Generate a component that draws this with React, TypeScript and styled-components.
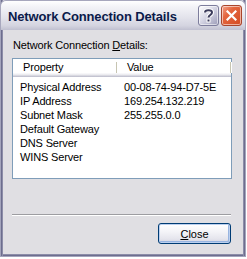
import styled, { createGlobalStyle } from "styled-components";

const GlobalStyle = createGlobalStyle`
  html, body {
    margin: 0;
    padding: 0;
    background: #ffffff;
  }
  body {
    font-family: "Liberation Sans", Arial, sans-serif;
    font-size: 11px;
    letter-spacing: -0.15px;
    color: #000;
  }
`;

const Window = styled.div`
  width: 246px;
  height: 257px;
  box-sizing: border-box;
  display: flex;
  flex-direction: column;
  background: #e0dfe3;
  border: 1px solid #a4a4bc;
  border-top: none;
  box-shadow: inset 1px 0 0 #6d6e8e, inset 2px 0 0 #8c8ca8, inset -1px 0 0 #6d6e8e,
    inset -2px 0 0 #8c8ca8, inset 0 -1px 0 #6d6e8e, inset 0 -2px 0 #8c8ca8;
`;

const TitleBar = styled.div`
  height: 29px;
  flex: none;
  display: flex;
  align-items: center;
  padding: 0 3px 0 7px;
  border-radius: 6px 6px 0 0;
  margin: 0 -1px;
  background: linear-gradient(
    to bottom,
    #ffffff 0%,
    #f3f3f7 20%,
    #e4e4ec 55%,
    #d4d4e0 85%,
    #c0c0d0 100%
  );
  border: 1px solid #a7a7bd;
  border-bottom: none;
`;

const Title = styled.span`
  flex: 1;
  font-family: "Liberation Sans", Arial, sans-serif;
  font-weight: bold;
  font-size: 13px;
  color: #0b1a4a;
  letter-spacing: -0.15px;
  padding-top: 1px;
`;

const CaptionButton = styled.div<{ $red?: boolean }>`
  width: 21px;
  height: 21px;
  box-sizing: border-box;
  border-radius: 3px;
  display: flex;
  align-items: center;
  justify-content: center;
  margin-left: 2px;
  border: 1px solid ${(p) => (p.$red ? "#a9452c" : "#7d7d9c")};
  background: ${(p) =>
    p.$red
      ? "linear-gradient(135deg, #f4a58f 0%, #e4663f 35%, #d44a22 100%)"
      : "linear-gradient(135deg, #ffffff 0%, #d8d8e6 45%, #9c9cb8 100%)"};
  box-shadow: inset 0 0 0 1px rgba(255, 255, 255, 0.55);
`;

const Body = styled.div`
  flex: 1;
  display: flex;
  flex-direction: column;
  padding: 9px 0 0 11px;
`;

const Label = styled.div`
  line-height: 13px;
  padding-left: 1px;
  u {
    text-decoration: underline;
  }
`;

const ListView = styled.div`
  margin-top: 6px;
  width: 220px;
  height: 121px;
  box-sizing: border-box;
  border: 1px solid #7f9db9;
  background: #ffffff;
`;

const Header = styled.div`
  display: flex;
  height: 18px;
  box-sizing: border-box;
  background: linear-gradient(to bottom, #ffffff 0%, #ffffff 75%, #f0f0f4 85%, #d8d8e0 92%, #b8b8c8 100%);
`;

const HeaderCell = styled.div<{ $w: number }>`
  width: ${(p) => p.$w}px;
  flex: none;
  box-sizing: border-box;
  padding: 2px 0 0 10px;
  line-height: 13px;
  position: relative;
  &::after {
    content: "";
    position: absolute;
    right: 0;
    top: 3px;
    height: 11px;
    width: 1px;
    background: #c7c5b2;
    box-shadow: 1px 0 0 #ffffff;
  }
`;

const Rows = styled.div`
  padding-top: 3px;
`;

const Row = styled.div`
  display: flex;
  height: 14px;
  line-height: 14px;
`;

const Cell = styled.div<{ $w: number }>`
  width: ${(p) => p.$w}px;
  flex: none;
  padding-left: 7px;
  box-sizing: border-box;
  white-space: nowrap;
`;

const Separator = styled.div`
  margin-top: 35px;
  width: 219px;
  height: 1px;
  background: #9d9da1;
  box-shadow: 0 1px 0 #ffffff;
`;

const Footer = styled.div`
  width: 219px;
  display: flex;
  justify-content: flex-end;
  margin-top: 8px;
`;

const Button = styled.button`
  width: 73px;
  height: 21px;
  box-sizing: border-box;
  border: 1px solid #003c74;
  border-radius: 3px;
  font-family: "Liberation Sans", Arial, sans-serif;
  font-size: 11px;
  color: #000;
  padding: 0;
  background: linear-gradient(to bottom, #ffffff 0%, #f4f4f8 40%, #e4e4ec 80%, #cfcfdc 100%);
  box-shadow: inset 0 0 0 1px #bcd0ef, inset -1px -1px 0 1px #98b4e0;
  u {
    text-decoration: underline;
  }
`;

const rows = [
  ["Physical Address", "00-08-74-94-D7-5E"],
  ["IP Address", "169.254.132.219"],
  ["Subnet Mask", "255.255.0.0"],
  ["Default Gateway", ""],
  ["DNS Server", ""],
  ["WINS Server", ""],
];

export default function App() {
  return (
    <>
      <GlobalStyle />
      <Window>
        <TitleBar>
          <Title>Network Connection Details</Title>
          <CaptionButton>
            <svg width="13" height="15" viewBox="0 0 13 15">
              <path
                d="M3 4.5 C3 1.5 10 1.5 10 4.5 C10 7 6.5 7 6.5 9.5"
                fill="none"
                stroke="#ffffff"
                strokeWidth="4"
              />
              <path
                d="M3 4.5 C3 1.5 10 1.5 10 4.5 C10 7 6.5 7 6.5 9.5"
                fill="none"
                stroke="#3c3c5c"
                strokeWidth="2"
              />
              <rect x="4.5" y="10.5" width="4" height="4" fill="#ffffff" />
              <rect x="5.5" y="11.5" width="2" height="2" fill="#3c3c5c" />
            </svg>
          </CaptionButton>
          <CaptionButton $red>
            <svg width="11" height="11" viewBox="0 0 11 11">
              <path d="M1.5 1.5 L9.5 9.5 M9.5 1.5 L1.5 9.5" stroke="#ffffff" strokeWidth="2.2" strokeLinecap="square" />
            </svg>
          </CaptionButton>
        </TitleBar>
        <Body>
          <Label>
            Network Connection <u>D</u>etails:
          </Label>
          <ListView>
            <Header>
              <HeaderCell $w={104}>Property</HeaderCell>
              <HeaderCell $w={114}>Value</HeaderCell>
            </Header>
            <Rows>
              {rows.map(([k, v]) => (
                <Row key={k}>
                  <Cell $w={104}>{k}</Cell>
                  <Cell $w={114}>{v}</Cell>
                </Row>
              ))}
            </Rows>
          </ListView>
          <Separator />
          <Footer>
            <Button>
              <u>C</u>lose
            </Button>
          </Footer>
        </Body>
      </Window>
    </>
  );
}
